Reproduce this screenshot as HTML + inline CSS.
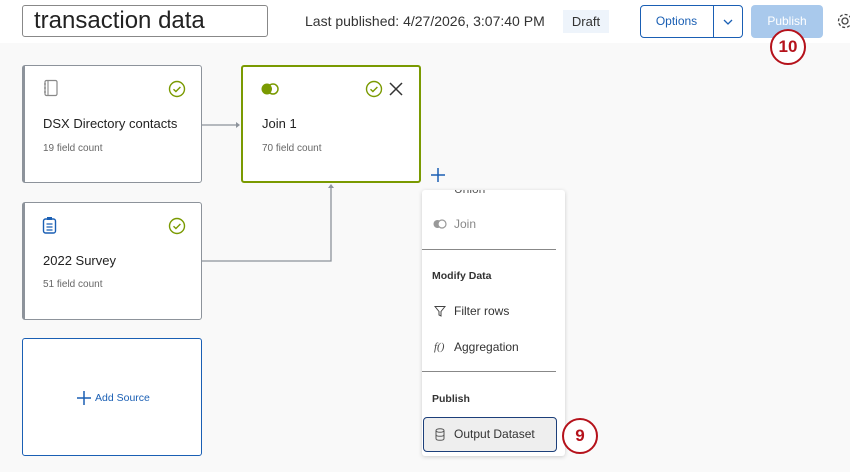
<!DOCTYPE html>
<html><head><meta charset="utf-8"><style>
*{box-sizing:border-box;margin:0;padding:0}
body{width:850px;height:472px;overflow:hidden;font-family:"Liberation Sans",sans-serif;background:#f9f9f9;position:relative;color:#222}
.hdr{position:absolute;left:0;top:0;width:850px;height:43px;background:#fff}
.abs{position:absolute}
.card{position:absolute;background:#fff;border:1px solid #8d939b;border-left:3px solid #8d939b;border-radius:3px;width:180px;height:118px}
.ttl{position:absolute;left:18px;top:50px;font-size:13px;color:#222}
.sub{position:absolute;left:18px;top:77px;font-size:10px;color:#666}
.mi{position:absolute;left:433px;font-size:12px;color:#333}
.mh{position:absolute;left:432px;font-size:10.5px;font-weight:bold;color:#333}
.circ{position:absolute;width:36px;height:36px;border:2.5px solid #b5121b;border-radius:50%;color:#b5121b;font-weight:bold;font-size:17px;text-align:center;line-height:31px;background:#fff}
</style></head><body>
<div class="hdr"></div>
<div class="abs" style="left:22px;top:5px;width:246px;height:32px;border:1px solid #888;border-radius:3px;font-size:24px;padding-left:11px;line-height:29px;color:#222">transaction data</div>
<div class="abs" style="left:305px;top:13px;font-size:14px;color:#333">Last published: 4/27/2026, 3:07:40 PM</div>
<div class="abs" style="left:563px;top:10px;width:46px;height:23px;background:#eef4fb;font-size:13px;color:#333;text-align:center;line-height:23px">Draft</div>
<div class="abs" style="left:640px;top:5px;width:103px;height:33px;border:1px solid #1a5fb4;border-radius:4px;background:#fff"></div>
<div class="abs" style="left:713px;top:5px;width:1px;height:33px;background:#1a5fb4"></div>
<div class="abs" style="left:640px;top:14px;width:73px;text-align:center;font-size:12px;color:#1a5fb4">Options</div>
<svg class="abs" style="left:722px;top:17px" width="12" height="10"><path d="M2 3l4 4 4-4" stroke="#1a5fb4" stroke-width="1.3" fill="none"/></svg>
<div class="abs" style="left:751px;top:5px;width:72px;height:33px;background:#a9c9ec;border-radius:4px;color:#fff;font-size:12px;text-align:center;line-height:32px">Publish</div>
<svg class="abs" style="left:836px;top:12px" width="16" height="18"><circle cx="9" cy="9" r="3" stroke="#444" stroke-width="1.3" fill="none"/><circle cx="9" cy="9" r="6.5" stroke="#444" stroke-width="1.3" stroke-dasharray="3 2" fill="none"/></svg>
<div class="circ" style="left:770px;top:29px">10</div>

<svg class="abs" style="left:0;top:0" width="850" height="472"><path d="M202 125H238" stroke="#8d939b" stroke-width="1.3"/><path d="M236 122l4 3-4 3z" fill="#8d939b"/><path d="M202 261H331V186" stroke="#8d939b" stroke-width="1.3" fill="none"/><path d="M328 188l3-4 3 4z" fill="#8d939b"/></svg>

<div class="card" style="left:22px;top:65px">
<svg class="abs" style="left:17px;top:13px" width="18" height="18"><rect x="3" y="1.5" width="12" height="15" rx="1.5" stroke="#888" fill="none" stroke-width="1.2"/><path d="M6 2v14M2 5h2M2 9h2M2 13h2" stroke="#888" stroke-width="1.1"/></svg>
<svg class="abs" style="left:143px;top:14px" width="18" height="18"><circle cx="9" cy="9" r="7.5" stroke="#7a9a01" stroke-width="1.4" fill="none"/><path d="M5.5 9.2l2.4 2.3 4.5-4.5" stroke="#7a9a01" stroke-width="1.4" fill="none"/></svg>
<div class="ttl">DSX Directory contacts</div><div class="sub">19 field count</div></div>

<div class="abs" style="left:241px;top:65px;width:180px;height:118px;background:#fff;border:2px solid #7a9a01;border-radius:3px">
<svg class="abs" style="left:18px;top:15px" width="20" height="14"><circle cx="6" cy="7" r="5.5" fill="#7a9a01"/><circle cx="12" cy="7" r="5" fill="#fff" stroke="#7a9a01" stroke-width="1.5"/><path d="M9 3a5 5 0 0 1 0 8a5 5 0 0 1 0-8z" fill="#7a9a01"/></svg>
<svg class="abs" style="left:122px;top:13px" width="18" height="18"><circle cx="9" cy="9" r="7.5" stroke="#7a9a01" stroke-width="1.4" fill="none"/><path d="M5.5 9.2l2.4 2.3 4.5-4.5" stroke="#7a9a01" stroke-width="1.4" fill="none"/></svg>
<svg class="abs" style="left:145px;top:14px" width="16" height="16"><path d="M2 2l12 12M14 2L2 14" stroke="#333" stroke-width="1.5"/></svg>
<div class="ttl" style="left:19px;top:49px">Join 1</div><div class="sub" style="left:19px;top:76px">70 field count</div></div>

<div class="card" style="left:22px;top:202px">
<svg class="abs" style="left:17px;top:13px" width="16" height="18"><rect x="1.5" y="3" width="12" height="14" rx="2" stroke="#1a5fb4" stroke-width="1.4" fill="none"/><rect x="5" y="1" width="5" height="3" fill="#1a5fb4"/><path d="M4.5 8h6M4.5 11h6M4.5 14h6" stroke="#1a5fb4" stroke-width="1.2"/></svg>
<svg class="abs" style="left:143px;top:14px" width="18" height="18"><circle cx="9" cy="9" r="7.5" stroke="#7a9a01" stroke-width="1.4" fill="none"/><path d="M5.5 9.2l2.4 2.3 4.5-4.5" stroke="#7a9a01" stroke-width="1.4" fill="none"/></svg>
<div class="ttl" style="top:50px">2022 Survey</div><div class="sub" style="top:76px">51 field count</div></div>

<div class="abs" style="left:22px;top:338px;width:180px;height:118px;background:#fff;border:1px solid #1a5fb4;border-radius:3px">
<svg class="abs" style="left:53px;top:51px" width="16" height="16"><path d="M8 1v14M1 8h14" stroke="#1a5fb4" stroke-width="1.5"/></svg>
<div class="abs" style="left:72px;top:53px;font-size:10.5px;color:#1a5fb4">Add Source</div></div>

<svg class="abs" style="left:430px;top:167px" width="16" height="16"><path d="M8 1v14M1 8h14" stroke="#1a5fb4" stroke-width="1.5"/></svg>

<div class="abs" style="left:422px;top:190px;width:143px;height:266px;background:#fff;border-radius:3px;box-shadow:0 1px 4px rgba(0,0,0,.18);overflow:hidden">
<div class="abs" style="left:32px;top:-8px;font-size:12px;color:#555">Union</div></div>
<svg class="abs" style="left:433px;top:219px" width="14" height="10"><circle cx="4.5" cy="5" r="4" fill="#999"/><circle cx="9" cy="5" r="4" fill="#fff" stroke="#999" stroke-width="1.2"/></svg>
<div class="mi" style="left:454px;top:217px;color:#888">Join</div>
<div class="abs" style="left:422px;top:249px;width:134px;height:1px;background:#888"></div>
<div class="mh" style="top:270px">Modify Data</div>
<svg class="abs" style="left:434px;top:305px" width="12" height="12"><path d="M1 1.5h10L7 6.5v4.5L5 10V6.5z" stroke="#444" fill="none" stroke-width="1"/></svg>
<div class="mi" style="left:454px;top:304px">Filter rows</div>
<div class="abs" style="left:434px;top:341px;font-size:11px;font-style:italic;color:#444;font-family:'Liberation Serif',serif">f()</div>
<div class="mi" style="left:454px;top:340px">Aggregation</div>
<div class="abs" style="left:422px;top:371px;width:134px;height:1px;background:#888"></div>
<div class="mh" style="top:393px">Publish</div>
<div class="abs" style="left:423px;top:417px;width:134px;height:35px;background:#eee;border:1.5px solid #1c3f7a;border-radius:4px"></div>
<svg class="abs" style="left:435px;top:428px" width="10" height="13"><ellipse cx="5" cy="2.5" rx="4" ry="1.8" stroke="#555" fill="none"/><path d="M1 2.5v8c0 2.4 8 2.4 8 0v-8M1 6.5c0 2.4 8 2.4 8 0" stroke="#555" fill="none"/></svg>
<div class="mi" style="left:454px;top:427px">Output Dataset</div>
<div class="circ" style="left:562px;top:418px">9</div>
</body></html>
